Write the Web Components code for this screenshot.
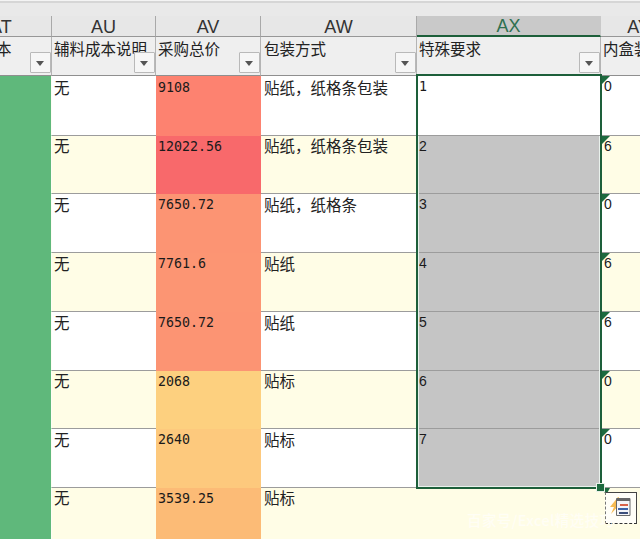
<!DOCTYPE html>
<html lang="zh"><head><meta charset="utf-8"><title>Sheet</title>
<style>
html,body{margin:0;padding:0;background:#e8e8e8;overflow:hidden}
body{width:640px;height:539px;font-family:"Noto Sans CJK SC","Liberation Sans",sans-serif;color:#222}
</style></head><body>
<x-sheet>
<x-top></x-top>
<x-col clip>AT</x-col><x-col>AU</x-col><x-col>AV</x-col><x-col>AW</x-col><x-col sel>AX</x-col><x-col>AY</x-col>
<x-field clip btn>本</x-field><x-field btn>辅料成本说明</x-field><x-field btn>采购总价</x-field><x-field btn wide>包装方式</x-field><x-field btn>特殊要求</x-field><x-field>内盒装箱数</x-field>

<x-cell green bg="#5fb87b"></x-cell><x-cell dn>无</x-cell><x-cell num dn bg="#fd8270">9108</x-cell><x-cell dn wide>贴纸&#xFF0C;纸格条包装</x-cell><x-cell num>1</x-cell><x-cell num tri>0</x-cell>
<x-cell green bg="#5fb87b"></x-cell><x-cell z up>无</x-cell><x-cell num bg="#f8696b">12022.56</x-cell><x-cell z up wide>贴纸&#xFF0C;纸格条包装</x-cell><x-cell num gray>2</x-cell><x-cell num tri z>6</x-cell>
<x-cell green bg="#5fb87b"></x-cell><x-cell>无</x-cell><x-cell num bg="#fc9473">7650.72</x-cell><x-cell wide>贴纸&#xFF0C;纸格条</x-cell><x-cell num gray>3</x-cell><x-cell num tri>0</x-cell>
<x-cell green bg="#5fb87b"></x-cell><x-cell z>无</x-cell><x-cell num bg="#fc9573">7761.6</x-cell><x-cell z wide>贴纸</x-cell><x-cell num gray>4</x-cell><x-cell num tri z>6</x-cell>
<x-cell green bg="#5fb87b"></x-cell><x-cell>无</x-cell><x-cell num bg="#fc9473">7650.72</x-cell><x-cell wide>贴纸</x-cell><x-cell num gray>5</x-cell><x-cell num tri>6</x-cell>
<x-cell green bg="#5fb87b"></x-cell><x-cell z up>无</x-cell><x-cell num bg="#fdd07f">2068</x-cell><x-cell z up wide>贴标</x-cell><x-cell num gray>6</x-cell><x-cell num tri z>0</x-cell>
<x-cell green bg="#5fb87b"></x-cell><x-cell>无</x-cell><x-cell num bg="#fdc97d">2640</x-cell><x-cell wide>贴标</x-cell><x-cell num gray>7</x-cell><x-cell num tri>0</x-cell>
<x-cell green bg="#5fb87b"></x-cell><x-cell z up>无</x-cell><x-cell num bg="#fcbb76">3539.25</x-cell><x-cell z up wide>贴标</x-cell><x-cell z></x-cell><x-cell z></x-cell>

<x-selection></x-selection>
<x-smart-tag></x-smart-tag>
<x-watermark>百家号/Excel精选技巧</x-watermark>
</x-sheet>
<script>
function def(name,css,html,extra){
  customElements.define(name,class extends HTMLElement{
    constructor(){super();this.attachShadow({mode:"open"}).innerHTML="<style>"+css+"</style>"+html;}
    connectedCallback(){if(extra)extra(this);}
  });
}
def("x-sheet",`:host{display:grid;position:relative;width:640px;height:539px;overflow:hidden;
  grid-template-columns:52px 104px 105px 156px 184px 76px;
  grid-template-rows:16px 21px 39px 60px 58px 59px 59px 59px 58px 59px 60px;}`,"<slot></slot>");
def("x-top",`:host{display:block;grid-column:1/-1;background:linear-gradient(#f4f4f4 0,#f4f4f4 1px,#d6d6d6 1px,#d6d6d6 3px,#e9e9e9 3px)}`,"");
def("x-col",`:host{display:flex;align-items:center;justify-content:center;box-sizing:border-box;background:#e7e7e7;
  border-right:1px solid #a9a9a9;border-bottom:1px solid #979797;padding-top:2px;
  font:18px "Liberation Sans",sans-serif;color:#333;overflow:hidden;white-space:nowrap}
  :host([sel]){background:#c9c9c9;color:#2f7050;border-bottom:2px solid #1d5f3a;border-right-color:#c9c9c9}
  :host([clip]){justify-content:flex-start}
  :host([clip]) span{margin-left:-10px}
  span{display:block}`,"<span><slot></slot></span>");
def("x-field",`:host{display:block;position:relative;box-sizing:border-box;background:#efefef;
  border-right:1px solid #b4b4b4;border-bottom:1px solid #8f8f8f;overflow:hidden;
  font-size:15.5px;line-height:22px;color:#222;padding:0 0 0 2px;white-space:nowrap}
  :host([wide]){padding-left:3px}
  :host([clip]){padding-left:0;text-indent:-4px}
  .b{display:none;position:absolute;right:0;bottom:2px;width:21px;height:21px;box-sizing:border-box;background:#f6f6f6;border:1px solid #b9b9b9;border-radius:1px;text-indent:0}
  :host([btn]) .b{display:block}
  .b i{position:absolute;left:5px;top:8px;width:0;height:0;border:4.5px solid transparent;border-top:5px solid #555;border-bottom:0}`,
  `<slot></slot><span class="b"><i></i></span>`);
def("x-cell",`:host{display:block;position:relative;box-sizing:border-box;background:#fff;
  border-bottom:1px solid #9c9c9c;padding:0 0 0 2px;overflow:hidden;white-space:nowrap;
  font-size:15.5px;line-height:20px;color:#222}
  :host([green]){border-right:1px solid #fdfdf4}
  :host([wide]){padding-left:3px}
  :host([dn]){line-height:22px}
  :host([up]){line-height:18px}
  :host([z]){background:#fffde6}
  :host([num]){font:13.3px/19px "DejaVu Sans Mono",monospace;padding-top:1px;color:#1a1a1a}
  :host([num][dn]){line-height:21px}
  :host([gray]){background:#c5c5c5;font-family:"Liberation Sans",sans-serif;font-size:14px}
  :host([tri]){font-family:"Liberation Sans",sans-serif;font-size:14px;padding-left:3px}
  .t{display:none;position:absolute;left:0;top:0;width:0;height:0;border-top:9px solid #1d6a3f;border-right:9px solid transparent}
  :host([tri]) .t{display:block}
  .x{position:relative}`,
  `<span class="t"></span><span class="x"><slot></slot></span>`,
  el=>{const b=el.getAttribute("bg");if(b){el.style.background=b;el.style.borderBottomColor=b;}});
def("x-selection",`:host{position:absolute;left:416px;top:74px;width:186px;height:415px;box-sizing:border-box;
  border:2px solid #1d5f3a;pointer-events:none}
  .w{position:absolute;inset:60px 0 0 0;border:solid #e9f1ec;border-width:0 1px 1px 1px}
  .h{position:absolute;right:-5px;bottom:-5px;width:7px;height:7px;background:#1d6a3f;border:1px solid #e8f0e8}
  .a{position:absolute;right:-10px;bottom:-8px;width:0;height:0;border-top:7px solid #1d6a3f;border-left:4px solid transparent;border-right:4px solid transparent}`,
  `<div class="w"></div><div class="a"></div><div class="h"></div>`);
def("x-smart-tag",`:host{position:absolute;left:605px;top:492px;width:32px;height:32px;box-sizing:border-box;background:#fffef8;
  border:1px solid #444;border-bottom:1px dashed #333;border-left:1px dashed #777}
  svg{display:block;margin:3px 0 0 4px}`,
  `<svg width="21" height="22" viewBox="0 0 21 22">
  <path d="M8 1L0 11h4L1 18l9-10H6l3-7z" fill="#f6bb52"/>
  <path d="M6.5 2.500h13.500v17H6.500z" fill="#f4f5f8" stroke="#6a6a6a" stroke-width="1"/>
  <rect x="7" y="2" width="13" height="3" fill="#666"/>
  <rect x="10" y="8" width="8" height="2" fill="#d9634a"/>
  <rect x="8" y="12" width="10" height="2" fill="#3c63a8"/>
  <rect x="9" y="16" width="9" height="2" fill="#3c4f7c"/>
  </svg>`);
def("x-watermark",`:host{position:absolute;left:467px;top:511px;font-size:14.5px;font-weight:500;line-height:18px;letter-spacing:.4px;color:#fff;opacity:.62;white-space:nowrap}`,"<slot></slot>");
</script>
</body></html>
